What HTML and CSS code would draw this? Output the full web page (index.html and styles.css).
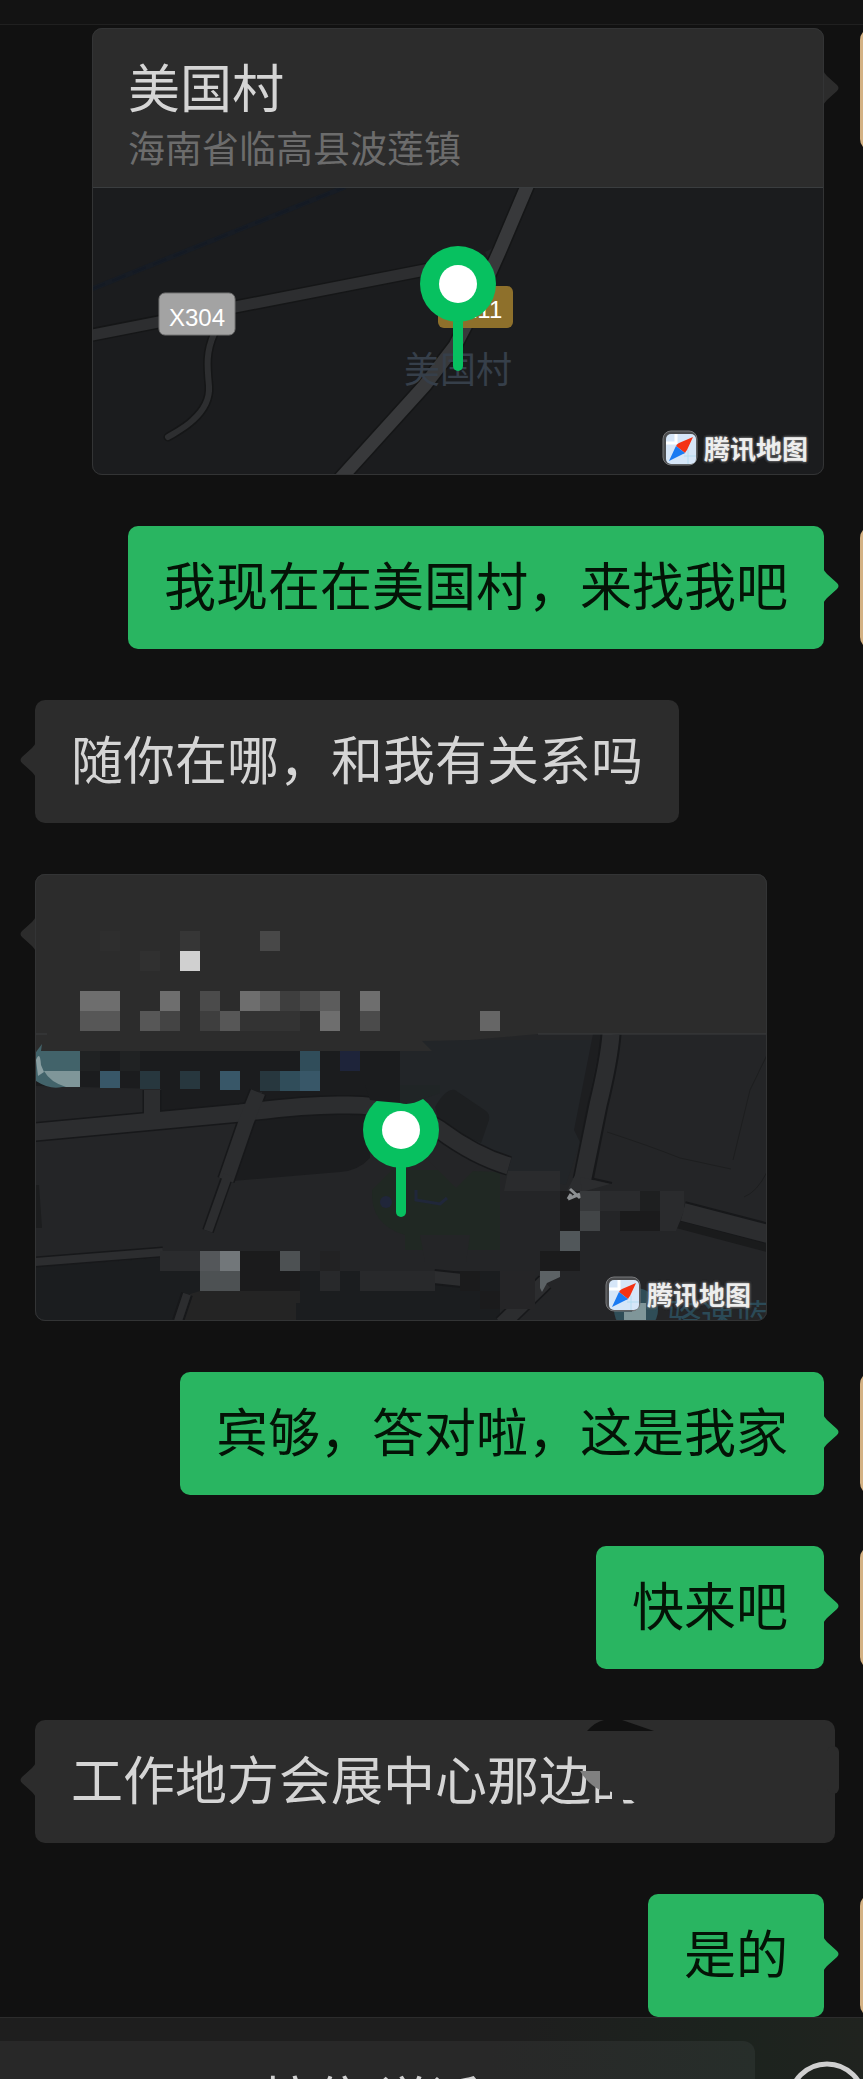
FILE: index.html
```html
<!DOCTYPE html>
<html lang="zh-CN">
<head>
    <meta charset="UTF-8">
    <meta name="viewport" content="width=device-width, initial-scale=1.0">
    <title>聊天</title>
    <link rel="stylesheet" href="styles.css">
</head>
<body>
    <div class="app">
        <header class="topbar"></header>

        <main class="chat">
            <div class="row out">
                <div class="card">
                    <div class="card-head">
                        <div class="card-title">美国村</div>
                        <div class="card-address">海南省临高县波莲镇</div>
                    </div>
                    <svg class="map" viewBox="92 188 732 287">
                        <rect x="92" y="188" width="732" height="287" fill="#1b1c1e"/>
                        <path d="M92 289L345 187" stroke="#171c24" stroke-width="5" fill="none"/>
                        <path d="M92 289L345 187" stroke="#141a24" stroke-width="2" stroke-dasharray="14 8" fill="none"/>
                        <path d="M92 335L430 269" stroke="#151617" stroke-width="14" fill="none"/>
                        <path d="M92 335L430 269" stroke="#2d2e30" stroke-width="11" fill="none"/>
                        <path d="M214 334C206 352 207 365 209 386C210 400 203 411 193 420C186 427 178 431 168 437" stroke="#151617" stroke-width="9" stroke-linecap="round" fill="none"/>
                        <path d="M214 334C206 352 207 365 209 386C210 400 203 411 193 420C186 427 178 431 168 437" stroke="#2d2e30" stroke-width="6" stroke-linecap="round" fill="none"/>
                        <path d="M485 252Q493 249 497 242L490 262Z" fill="#222325"/>
                        <path d="M528 184L500 250L471 315L455 346L425 385L340 479" stroke="#151617" stroke-width="16" fill="none"/>
                        <path d="M528 184L500 250L471 315L455 346L425 385L340 479" stroke="#38393b" stroke-width="13" fill="none"/>
                        <rect x="159" y="293" width="76" height="42" rx="6" fill="#a3a3a3" stroke="#747474"/>
                        <text class="road-no" x="169" y="326">X304</text>
                        <rect x="438" y="286" width="75" height="42" rx="6" fill="#8e702b"/>
                        <text class="road-no" x="448" y="318">S211</text>
                        <text class="place" x="404" y="383">美国村</text>
                        <path d="M458 310V366" stroke="#07c160" stroke-width="10" stroke-linecap="round"/>
                        <circle cx="458" cy="284" r="38" fill="#07c160"/>
                        <circle cx="458" cy="284" r="19" fill="#fff"/>
                    </svg>
                    <div class="brand">
                        <svg class="brand-icon" viewBox="0 0 36 36">
                            <rect x="1" y="1" width="34" height="34" rx="8" fill="#4b4c4e" stroke="#77787a"/>
                            <rect x="4" y="4" width="30" height="30" rx="5" fill="#d6e6f8"/>
                            <path d="M14 4V14M4 13H14" stroke="#fff" stroke-width="3"/>
                            <path d="M26 20V34M22 26H34" stroke="#b4dcf0" stroke-width="1"/>
                            <path d="M31 7L17 13Q15 14 14 16L23 23Q24 21 25 20Z" fill="#f43214"/>
                            <path d="M7 31L13 18Q14 16 14 16L23 23Q22 24 21 24Z" fill="#1b7bf2"/>
                        </svg>
                        <span>腾讯地图</span>
                    </div>
                </div>
                <div class="avatar"></div>
            </div>

            <div class="row out">
                <div class="bubble">我现在在美国村，来找我吧</div>
                <div class="avatar"></div>
            </div>

            <div class="row in">
                <div class="bubble">随你在哪，和我有关系吗</div>
            </div>

            <div class="row in">
                <div class="card">
                    <svg class="map map-full" viewBox="35 874 732 447">
                        <rect x="35" y="874" width="732" height="447" fill="#242527"/>

                        <!-- blocks -->
                        <path d="M35 1050H400V1100L262 1104V1092L250 1092L245 1104L161 1112V1089L35 1086Z" fill="#1b1c1e"/>
                        <path d="M35 1087L142 1090V1116L35 1124Z" fill="#242527"/>
                        <path d="M400 1040H595V1055L575 1130L580 1142L566 1185L508 1171L440 1130L400 1104Z" fill="#222528"/>
                        <path d="M593 1034H602L580 1142L574 1130Z" fill="#1d1e20"/>
                        <path d="M255 1120L345 1112L370 1113V1158Q358 1171 340 1172L232 1181Z" fill="#1b1c1e"/>
                        <path d="M435 1107Q446 1088 455 1090L486 1111Q490 1114 489 1120L481 1143L440 1125Z" fill="#1d1f21"/>
                        <path d="M372 1190L392 1170H440L500 1172V1250H405V1235Q370 1225 372 1190Z" fill="#202823"/>
                        <path d="M428 1160L440 1142L482 1162L456 1188Z" fill="#242527"/>
                        <path d="M420 1235H470L466 1262H425Z" fill="#242527"/>
                        <path d="M416 1190V1200L440 1204L447 1198" stroke="#20273a" stroke-width="3" fill="none"/>
                        <circle cx="386" cy="1202" r="6" fill="#20263a"/>
                        <path d="M35 1185H39L42 1228H35Z" fill="#1c1d1e"/>
                        <path d="M35 1267L160 1258V1271H500V1321H35Z" fill="#1b1d1f"/>
                        <path d="M190 1294L200 1291H300V1303H296V1321H184Z" fill="#242424"/>

                        <!-- roads -->
                        <g fill="none" stroke="#17181a">
                            <path d="M35 1132L240 1113Q310 1104 345 1105Q400 1104 440 1130Q475 1156 509 1166" stroke-width="20"/>
                            <path d="M152 1090V1120" stroke-width="19"/>
                            <path d="M258 1092L246 1122L226 1180" stroke-width="18"/>
                            <path d="M226 1180L208 1231" stroke-width="12"/>
                            <path d="M35 1262L163 1252" stroke-width="11"/>
                            <path d="M187 1294L178 1321" stroke-width="12"/>
                            <path d="M611 1034Q609 1060 598 1105L583 1180" stroke-width="21"/>
                            <path d="M590 1178L612 1183" stroke-width="2"/>
                            <path d="M683 1212L768 1234" stroke-width="22"/>
                            <path d="M434 1277L462 1280" stroke-width="16"/>
                            <path d="M502 1324L545 1282" stroke-width="18"/>
                        </g>
                        <path d="M680 1221L767 1244V1252L676 1228Z" fill="#1a1b1c"/>
                        <g fill="none" stroke="#2c2d2f">
                            <path d="M35 1132L240 1113Q310 1104 345 1105Q400 1104 440 1130Q475 1156 509 1166" stroke-width="17"/>
                            <path d="M152 1090V1120" stroke-width="16"/>
                            <path d="M258 1092L246 1122L226 1180" stroke-width="15"/>
                            <path d="M228 1175L208 1231" stroke-width="9"/>
                            <path d="M35 1262L163 1252" stroke-width="8"/>
                            <path d="M187 1294L178 1321" stroke-width="8"/>
                            <path d="M611 1034Q609 1060 598 1105L583 1178L572 1200" stroke-width="17"/>
                            <path d="M683 1212L768 1234" stroke-width="18"/>
                            <path d="M434 1277L462 1280" stroke-width="12"/>
                            <path d="M502 1324L545 1282" stroke-width="15"/>
                        </g>
                        <path d="M580 1177L610 1184L582 1192Z" fill="#2c2d2f"/>
                        <path d="M607 1132Q650 1146 680 1158L731 1169M767 1055L750 1090L733 1160M767 1172Q757 1192 744 1197" stroke="#1d1e1f" stroke-width="1" fill="none"/>

                        <!-- card head -->
                        <path d="M35 874H767V1034H538L470 1040L422 1041L432 1051H35Z" fill="#2c2c2c"/>
                        <path d="M538 1034H767M35 1034H47" stroke="#3a3d3f"/>

                        <!-- pixelated title and address -->
                        <path d="M100 931h20v20h-20z" fill="#2e2e2e"/>
                        <path d="M180 931h20v20h-20z" fill="#363636"/>
                        <path d="M260 931h20v20h-20z" fill="#484848"/>
                        <path d="M140 951h20v20h-20z" fill="#303030"/>
                        <path d="M180 951h20v20h-20z" fill="#d0d0d0"/>
                        <path d="M80 991h40v20h-40zM160 991h20v20h-20zM240 991h20v20h-20zM360 991h20v20h-20zM320 1011h20v20h-20z" fill="#6e6e6e"/>
                        <path d="M260 991h20v20h-20zM320 991h20v20h-20z" fill="#5c5c5c"/>
                        <path d="M200 991h20v20h-20zM300 991h20v20h-20zM360 1011h20v20h-20z" fill="#4b4b4b"/>
                        <path d="M280 991h20v20h-20zM200 1011h20v20h-20z" fill="#3e3e3e"/>
                        <path d="M80 1011h40v20h-40zM140 1011h20v20h-20zM220 1011h20v20h-20z" fill="#575757"/>
                        <path d="M160 1011h20v20h-20z" fill="#444"/>
                        <path d="M240 1011h60v20h-60z" fill="#333"/>
                        <path d="M480 1011h20v20h-20z" fill="#666"/>

                        <!-- pixelated labels on the map -->
                        <path d="M36 1052L42 1044L41 1051H80V1087H62Q50 1090 36 1081Z" fill="#42636a"/>
                        <path d="M36 1060Q40 1050 41 1065L44 1072L38 1076Z" fill="#8a9fa2"/>
                        <path d="M44 1071H80V1087H66Q50 1082 44 1071Z" fill="#7f9699"/>
                        <path d="M80 1051h20v20h-20zM120 1051h20v20h-20z" fill="#202223"/>
                        <path d="M340 1051h20v20h-20z" fill="#1e243a"/>
                        <path d="M300 1051h20v20h-20zM280 1071h20v20h-20z" fill="#304d5a"/>
                        <path d="M100 1071h20v17h-20zM220 1071h20v19h-20zM300 1071h20v20h-20z" fill="#385768"/>
                        <path d="M140 1071h20v18h-20zM180 1071h20v18h-20zM260 1071h20v20h-20z" fill="#27373e"/>
                        <path d="M160 1251h40v20h-40z" fill="#2a2b2d"/>
                        <path d="M240 1251h60v40h-60z" fill="#1b1b1c"/>
                        <path d="M200 1251h20v20h-20z" fill="#54575a"/>
                        <path d="M220 1251h20v20h-20z" fill="#72777a"/>
                        <path d="M200 1271h40v20h-40zM280 1251h20v20h-20z" fill="#4d5153"/>
                        <path d="M320 1251h20v20h-20z" fill="#222223"/>
                        <path d="M320 1271h20v20h-20zM360 1271h75v20h-75z" fill="#28292b"/>
                        <path d="M460 1271h20v20h-20zM480 1291h20v18h-20z" fill="#1b1b1c"/>
                        <path d="M500 1271h35v38h-35z" fill="#252527"/>
                        <path d="M508 1171h52v20h-56z" fill="#2a2b2d"/>
                        <path d="M504 1191h56v60h-56z" fill="#242527"/>
                        <path d="M560 1191h20v40h-20zM540 1251h40v20h-40zM640 1211h20v20h-20zM620 1211h20v20h-20z" fill="#1b1b1c"/>
                        <path d="M640 1191h20v20h-20z" fill="#1e1f20"/>
                        <path d="M580 1191h20v20h-20z" fill="#37393b"/>
                        <path d="M600 1191h40v20h-40zM660 1191h24v20l-8 20h-16z" fill="#2a2b2d"/>
                        <path d="M580 1211h20v20h-20z" fill="#424547"/>
                        <path d="M560 1231h20v20h-20z" fill="#51575a"/>
                        <path d="M540 1271h20v6L547 1283L542 1292L540 1288Z" fill="#5c6265"/>
                        <path d="M568 1199L580 1194M570 1189L580 1198M571 1194L568 1199" stroke="#8d9092" stroke-width="3" fill="none"/>

                        <circle cx="636" cy="1310" r="22" fill="#2f4d57"/>
                        <path d="M624 1321V1312H632V1306L640 1303H646V1321Z" fill="#7f9699"/>
                        <text class="poi" x="667" y="1329">骆速蓝</text>

                        <path d="M401 1150V1212" stroke="#07c160" stroke-width="10" stroke-linecap="round"/>
                        <circle cx="401" cy="1130" r="38" fill="#07c160"/>
                        <circle cx="401" cy="1130" r="19" fill="#fff"/>
                        <path d="M365 1085H400V1103L377 1101L370 1100Z" fill="#1b1c1e"/>
                        <path d="M400 1085H440V1093L423 1099Q410 1106 400 1103Z" fill="#202526"/>
                    </svg>
                    <div class="brand">
                        <svg class="brand-icon" viewBox="0 0 36 36">
                            <rect x="1" y="1" width="34" height="34" rx="8" fill="#4b4c4e" stroke="#77787a"/>
                            <rect x="4" y="4" width="30" height="30" rx="5" fill="#d6e6f8"/>
                            <path d="M14 4V14M4 13H14" stroke="#fff" stroke-width="3"/>
                            <path d="M26 20V34M22 26H34" stroke="#b4dcf0" stroke-width="1"/>
                            <path d="M31 7L17 13Q15 14 14 16L23 23Q24 21 25 20Z" fill="#f43214"/>
                            <path d="M7 31L13 18Q14 16 14 16L23 23Q22 24 21 24Z" fill="#1b7bf2"/>
                        </svg>
                        <span>腾讯地图</span>
                    </div>
                </div>
            </div>

            <div class="row out">
                <div class="bubble">宾够，答对啦，这是我家</div>
                <div class="avatar"></div>
            </div>

            <div class="row out">
                <div class="bubble">快来吧</div>
                <div class="avatar"></div>
            </div>

            <div class="row in">
                <div class="bubble erased">工作地方会展中心那边的
                    <svg class="eraser" viewBox="580 1720 80 123">
                        <path d="M586 1750H650V1810H635V1803L630 1799H623V1810H612V1792L600 1789Q590 1785 586 1774Z" fill="#2c2c2c"/>
                        <path d="M580 1771H600V1790Q588 1784 580 1771Z" fill="#808080"/>
                        <path d="M587 1731Q595 1722 604 1720H622L654 1731Z" fill="#111"/>
                    </svg>
                </div>
            </div>

            <div class="row out">
                <div class="bubble">是的</div>
                <div class="avatar"></div>
            </div>
        </main>

        <footer class="inputbar">
            <button class="talk" type="button">按住 说话</button>
            <button class="emoji" type="button" aria-label="表情">
                <svg viewBox="0 0 80 80">
                    <circle cx="40" cy="40" r="37" fill="none" stroke="#d0d0d0" stroke-width="5"/>
                    <circle cx="27" cy="33" r="4" fill="#d0d0d0"/>
                    <circle cx="53" cy="33" r="4" fill="#d0d0d0"/>
                    <path d="M22 46Q40 68 58 46Z" fill="none" stroke="#d0d0d0" stroke-width="5"/>
                </svg>
            </button>
        </footer>
    </div>
</body>
</html>
```

FILE: styles.css
```css
* {
    box-sizing: border-box;
}

body {
    margin: 0;
    background-color: #111;
    color: #d5d5d5;
    font-family: "Noto Sans CJK SC", sans-serif;
}

.app {
    height: 100vh;
    overflow: hidden;
}

.topbar {
    height: 25px;
    background-color: #131313;
    border-bottom: 1px solid #202020;
}

.chat {
    display: flex;
    flex-direction: column;
    gap: 51px;
    padding-top: 3px;
    overflow: hidden;
}

.row {
    display: flex;
    gap: 36px;
}

.row.in {
    padding-left: 35px;
}

.row.out {
    justify-content: flex-end;
}

/* only the edge of the avatar is on screen */
.avatar {
    flex: none;
    width: 123px;
    height: 123px;
    margin-right: -120px;
    border-radius: 12px;
    background-color: #d3b183;
}

.bubble {
    position: relative;
    padding: 20px 36px 28px;
    border-radius: 10px;
    background-color: #2c2c2c;
    font-size: 52px;
    line-height: 75px;
    white-space: nowrap;
}

.out .bubble {
    background-color: #29b561;
    color: #041306;
}

/* little arrow */
.bubble::before,
.card::before {
    content: "";
    position: absolute;
    top: 42px;
    left: -15px;
    width: 16px;
    height: 36px;
    background-color: #2c2c2c;
    clip-path: path("M16 0Q15 3 12 6L2 15Q-1 18 2 21L12 30Q15 33 16 36Z");
}

.out .bubble::before,
.out .card::before {
    left: auto;
    right: -15px;
    clip-path: path("M0 0Q1 3 4 6L14 15Q17 18 14 21L4 30Q1 33 0 36Z");
}

.out .bubble::before {
    background-color: #29b561;
}

.erased {
    padding-right: 192px;
}

.erased::after {
    content: "";
    position: absolute;
    top: 26px;
    right: -4px;
    width: 12px;
    height: 48px;
    border-radius: 6px;
    background-color: #2c2c2c;
}

.eraser {
    position: absolute;
    top: 0;
    left: 545px;
    width: 80px;
    height: 123px;
}

.card {
    position: relative;
    width: 732px;
    border-radius: 10px;
    background-color: #2c2c2c;
}

.card::after {
    content: "";
    position: absolute;
    inset: 0;
    border: 1px solid #333435;
    border-radius: 10px;
}

.card-head {
    padding: 20px 36px 16px;
    border-bottom: 1px solid #3a3d3f;
}

.card-title {
    font-size: 52px;
    line-height: 75px;
}

.card-address {
    color: #6c6c6c;
    font-size: 37px;
    line-height: 48px;
}

.map {
    display: block;
    width: 100%;
    border-radius: 0 0 10px 10px;
}

.map-full {
    border-radius: 10px;
}

.road-no {
    fill: #fff;
    font-family: "Liberation Sans", sans-serif;
    font-size: 24px;
}

.place {
    fill: #363f4a;
    font-size: 36px;
}

.poi {
    fill: #2b4a57;
    font-size: 34px;
}

.brand {
    position: absolute;
    right: 16px;
    bottom: 9px;
    display: flex;
    align-items: center;
    gap: 6px;
    color: #eee;
    font-size: 26px;
    font-weight: bold;
    line-height: 36px;
    text-shadow: 0 0 3px #777, 0 0 3px #777;
}

.brand-icon {
    width: 36px;
    height: 36px;
}

.inputbar {
    display: flex;
    align-items: flex-start;
    justify-content: space-between;
    padding: 23px 0 24px;
    border-top: 1px solid #2c2c2c;
    background: linear-gradient(to right, #1e1e1e 60%, #1c231e 85%, #20231f);
}

.talk {
    flex: 1;
    height: 112px;
    padding: 0 12px 0 0;
    border: 0;
    border-radius: 0 12px 12px 0;
    background: linear-gradient(to right, #282828 65%, #272e2a);
    color: #d0d0d0;
    font-family: inherit;
    font-size: 52px;
    line-height: 75px;
}

.emoji {
    flex: none;
    width: 80px;
    height: 80px;
    margin: 20px -4px 0 32px;
    padding: 0;
    border: 0;
    background: none;
}

.emoji svg {
    display: block;
}
```
